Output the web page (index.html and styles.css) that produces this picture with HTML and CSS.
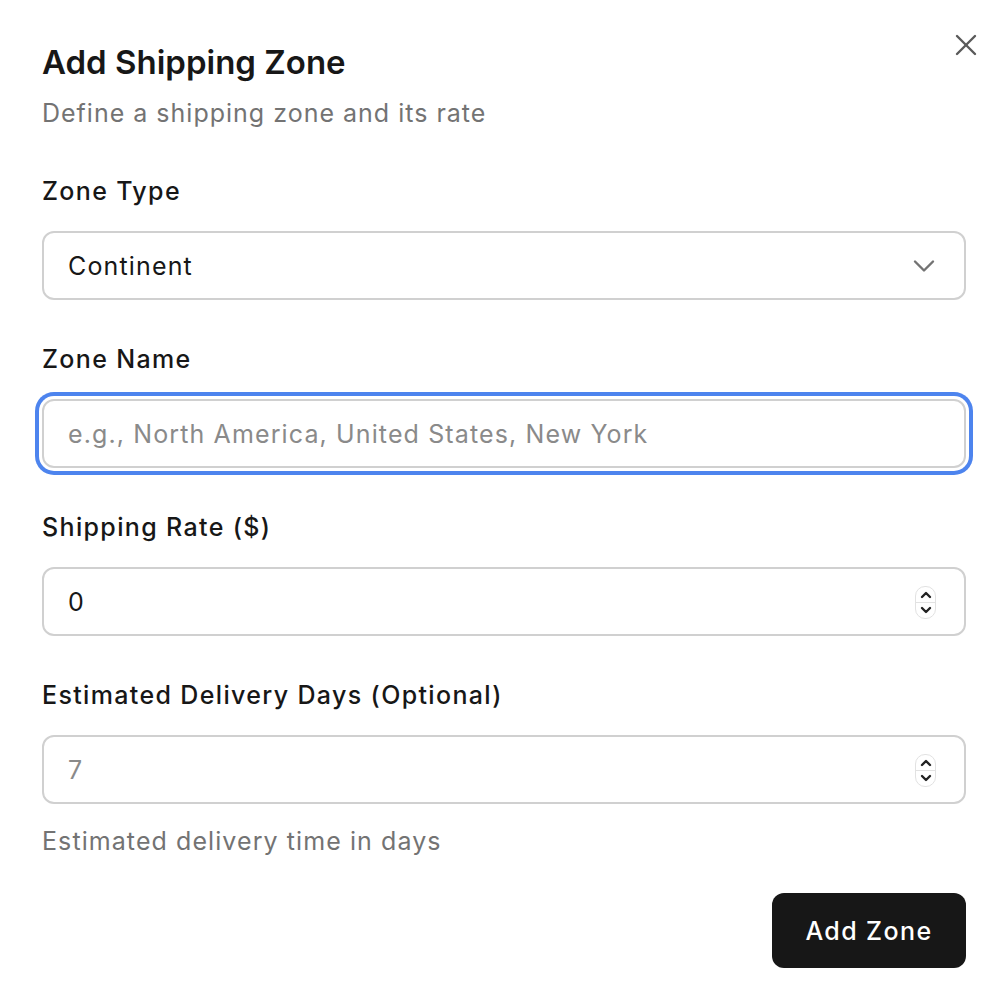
FILE: index.html
```html
<!DOCTYPE html>
<html lang="en">
<head>
<meta charset="utf-8">
<title>Add Shipping Zone</title>
<link rel="stylesheet" href="styles.css">
</head>
<body>
<div class="dialog">
  <button class="close" aria-label="Close">
    <svg width="36" height="36" viewBox="0 0 24 24" fill="none" stroke="currentColor" stroke-width="1.6" stroke-linecap="round" stroke-linejoin="round"><path d="M18 6 6 18"/><path d="m6 6 12 12"/></svg>
  </button>
  <h2 class="title">Add Shipping Zone</h2>
  <p class="subtitle">Define a shipping zone and its rate</p>

  <div class="field">
    <label class="label">Zone Type</label>
    <div class="box select">
      <span class="value">Continent</span>
      <svg class="chev" width="36" height="36" viewBox="0 0 24 24" fill="none" stroke="currentColor" stroke-width="1.6" stroke-linecap="round" stroke-linejoin="round"><path d="m6 9 6 6 6-6"/></svg>
    </div>
  </div>

  <div class="field">
    <label class="label">Zone Name</label>
    <div class="box focused">
      <input class="input" type="text" placeholder="e.g., North America, United States, New York">
    </div>
  </div>

  <div class="field">
    <label class="label">Shipping Rate ($)</label>
    <div class="box">
      <input class="input" type="text" value="0">
      <div class="spin">
        <svg width="12" height="8" viewBox="0 0 12 8" fill="none" stroke="currentColor" stroke-width="2.4" stroke-linecap="round" stroke-linejoin="round"><path d="M2 6 6 2l4 4"/></svg>
        <span class="spin-line"></span>
        <svg width="12" height="8" viewBox="0 0 12 8" fill="none" stroke="currentColor" stroke-width="2.4" stroke-linecap="round" stroke-linejoin="round"><path d="M2 2l4 4 4-4"/></svg>
      </div>
    </div>
  </div>

  <div class="field">
    <label class="label">Estimated Delivery Days (Optional)</label>
    <div class="box">
      <input class="input" type="text" placeholder="7">
      <div class="spin">
        <svg width="12" height="8" viewBox="0 0 12 8" fill="none" stroke="currentColor" stroke-width="2.4" stroke-linecap="round" stroke-linejoin="round"><path d="M2 6 6 2l4 4"/></svg>
        <span class="spin-line"></span>
        <svg width="12" height="8" viewBox="0 0 12 8" fill="none" stroke="currentColor" stroke-width="2.4" stroke-linecap="round" stroke-linejoin="round"><path d="M2 2l4 4 4-4"/></svg>
      </div>
    </div>
    <p class="help">Estimated delivery time in days</p>
  </div>

  <div class="footer">
    <button class="primary">Add Zone</button>
  </div>
</div>
</body>
</html>
```

FILE: styles.css
```css
* { box-sizing: border-box; }
html, body { margin: 0; padding: 0; background: #fff; }
body {
  font-family: Inter, "Noto Sans", "Liberation Sans", sans-serif;
  color: #171717;
}
.dialog {
  position: relative;
  width: 990px;
  padding: 40px 24px 0 42px;
}
.close {
  position: absolute;
  top: 27px;
  left: 948px;
  width: 36px;
  height: 36px;
  padding: 0;
  border: 0;
  background: none;
  color: #5a5a5a;
  display: flex;
}
.title {
  margin: 0;
  font-size: 33px;
  line-height: 44px;
  font-weight: 600;
  letter-spacing: 0;
  color: #171717;
}
.subtitle {
  margin: 13px 0 0;
  font-size: 25px;
  line-height: 32px;
  color: #737373;
  letter-spacing: 1px;
}
.field {
  margin-top: 46px;
  display: flex;
  flex-direction: column;
}
.field + .field { margin-top: 43px; }
.label {
  font-size: 25px;
  line-height: 32px;
  font-weight: 500;
  letter-spacing: 1.35px;
  margin-bottom: 24px;
}
.box {
  height: 69px;
  border: 2px solid #d0d0d0;
  border-radius: 12px;
  display: flex;
  align-items: center;
  padding: 0 28px 0 24px;
  background: #fff;
}
.select { padding-right: 22px; }
.box.focused {
  box-shadow: 0 0 0 3px #fff, 0 0 0 7px #4d84ee;
}
.value {
  flex: 1;
  font-size: 25px;
  letter-spacing: 1.15px;
  color: #171717;
}
.chev { color: #737373; }
.input {
  flex: 1;
  min-width: 0;
  border: 0;
  outline: 0;
  padding: 0;
  background: transparent;
  font-family: inherit;
  font-size: 25px;
  letter-spacing: 1.12px;
  color: #171717;
}
.input::placeholder { color: #8a8a8a; }
.spin {
  width: 21px;
  height: 33px;
  border: 1px solid #e2e2e2;
  border-radius: 10px;
  display: flex;
  flex-direction: column;
  align-items: center;
  justify-content: space-between;
  padding: 4px 0;
  color: #222;
  margin-top: 2px;
}
.spin-line {
  width: 100%;
  height: 1px;
  background: #e2e2e2;
}
.help {
  margin: 21px 0 0;
  font-size: 25px;
  line-height: 32px;
  color: #737373;
  letter-spacing: 1.08px;
}
.footer {
  display: flex;
  justify-content: flex-end;
  margin-top: 36px;
}
.primary {
  width: 194px;
  height: 75px;
  border: 0;
  border-radius: 12px;
  background: #171717;
  color: #fff;
  font-family: inherit;
  font-size: 25px;
  font-weight: 500;
  letter-spacing: 1.4px;
}
```
